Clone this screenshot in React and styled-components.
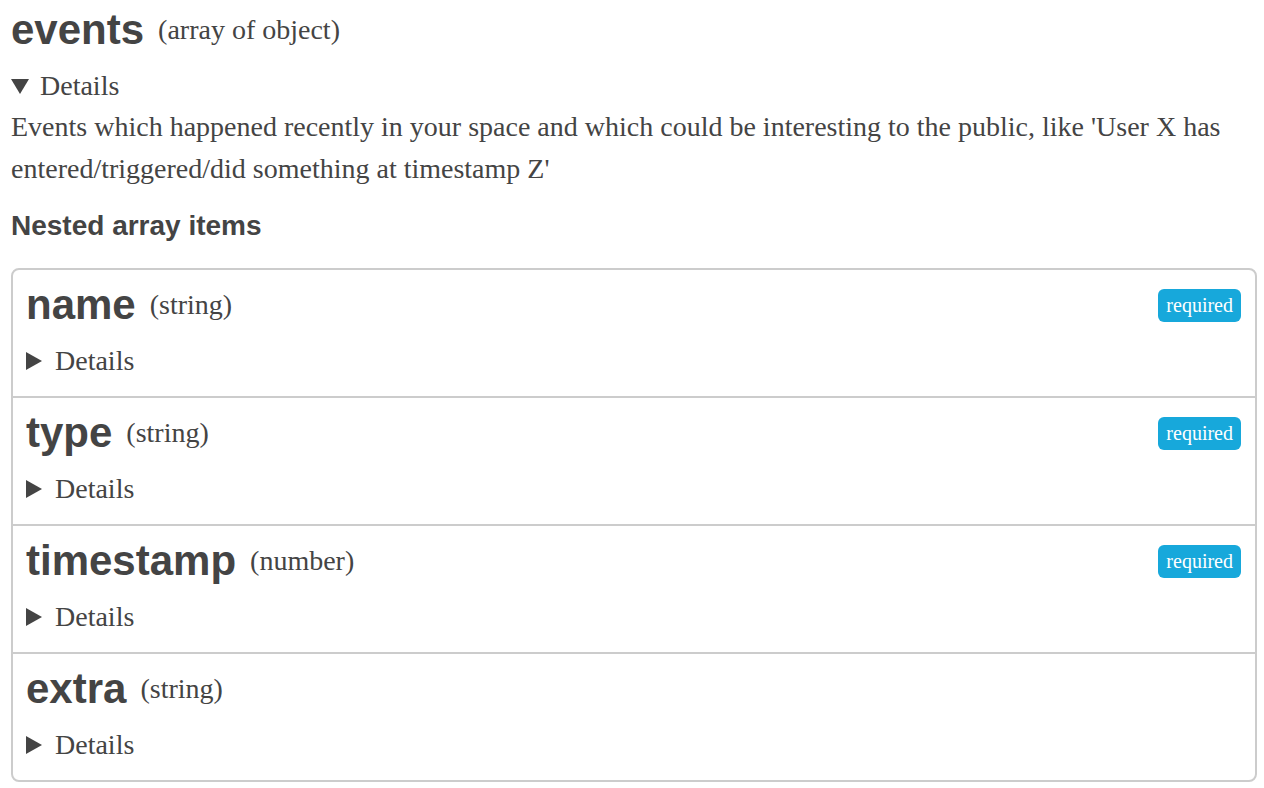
import React from "react";
import styled, { createGlobalStyle } from "styled-components";

const GlobalStyle = createGlobalStyle`
  html, body {
    margin: 0;
    padding: 0;
    background: #fff;
  }
  body {
    color: #444;
    font-family: "Liberation Serif", "Times New Roman", serif;
  }
`;

const fields = [
  { name: "name", type: "string", required: true },
  { name: "type", type: "string", required: true },
  { name: "timestamp", type: "number", required: true },
  { name: "extra", type: "string", required: false },
];

const Caret = ({ open }) =>
  open ? (
    <svg width="18" height="16" viewBox="0 0 18 16">
      <polygon points="0,1 18,1 9,16" fill="#444" />
    </svg>
  ) : (
    <svg width="16" height="18" viewBox="0 0 16 18">
      <polygon points="0,0 16,9 0,18" fill="#444" />
    </svg>
  );

const Field = ({ name, type, required }) => (
  <Row>
    <RowHead>
      <Name>{name}</Name>
      <TypeLabel>({type})</TypeLabel>
      {required && <Badge>required</Badge>}
    </RowHead>
    <Summary>
      <Caret />
      <span>Details</span>
    </Summary>
  </Row>
);

const App = () => (
  <Page>
    <GlobalStyle />
    <Header>
      <Title>events</Title>
      <TypeLabel>(array of object)</TypeLabel>
    </Header>
    <Summary $open>
      <Caret open />
      <span>Details</span>
    </Summary>
    <Description>
      Events which happened recently in your space and which could be
      interesting to the public, like 'User X has entered/triggered/did
      something at timestamp Z'
    </Description>
    <SubHeading>Nested array items</SubHeading>
    <List>
      {fields.map((f) => (
        <Field key={f.name} {...f} />
      ))}
    </List>
  </Page>
);

export default App;

const Page = styled.div`
  padding: 6px 7px 8px 11px;
`;

const Header = styled.div`
  display: flex;
  align-items: center;
  gap: 14px;
  height: 48px;
`;

const Title = styled.span`
  font-family: "Liberation Sans", Arial, sans-serif;
  font-weight: 700;
  font-size: 42px;
  line-height: 48px;
`;

const TypeLabel = styled.span`
  font-size: 28px;
  line-height: 42px;
`;

const Summary = styled.div`
  display: flex;
  align-items: center;
  gap: ${(p) => (p.$open ? "11px" : "13px")};
  margin-top: 11px;
  font-size: 28px;
  line-height: 42px;
  svg {
    flex: none;
  }
`;

const Description = styled.p`
  margin: -1px 0 0;
  font-size: 28px;
  line-height: 42px;
`;

const SubHeading = styled.div`
  margin-top: 19px;
  font-family: "Liberation Sans", Arial, sans-serif;
  font-weight: 700;
  font-size: 28px;
  line-height: 34px;
`;

const List = styled.div`
  margin-top: 25px;
  border: 2px solid #ccc;
  border-radius: 8px;
`;

const Row = styled.div`
  padding: 11px 14px 14px 13px;
  height: 126px;
  box-sizing: border-box;
  & + & {
    border-top: 2px solid #ccc;
    height: 128px;
  }
`;

const RowHead = styled.div`
  display: flex;
  align-items: center;
  gap: 14px;
  height: 48px;
`;

const Name = styled.span`
  font-family: "Liberation Sans", Arial, sans-serif;
  font-weight: 700;
  font-size: 42px;
  line-height: 48px;
`;

const Badge = styled.span`
  margin-left: auto;
  background: #17a8db;
  color: #fff;
  font-size: 20px;
  line-height: 25px;
  padding: 4px 8px;
  border-radius: 6px;
`;
